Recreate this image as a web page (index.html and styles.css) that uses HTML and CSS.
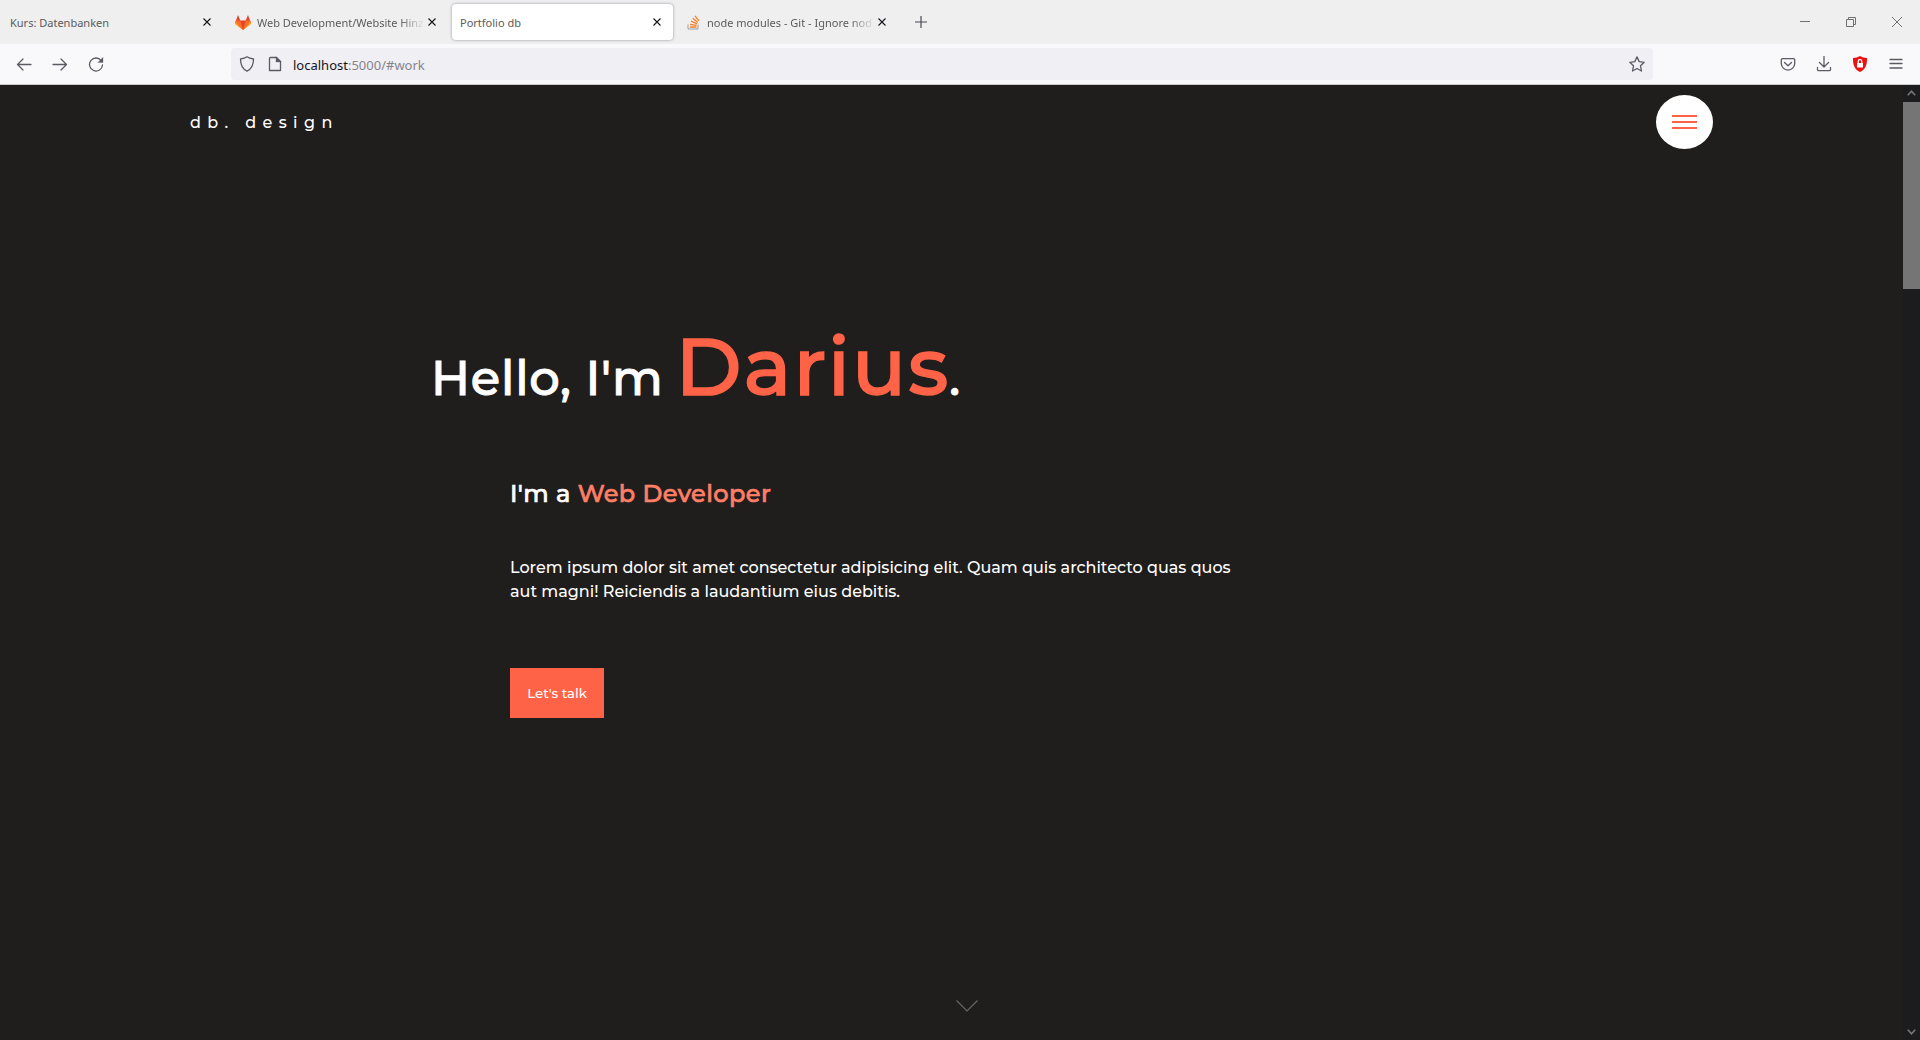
FILE: index.html
```html
<!DOCTYPE html>
<html lang="en">
<head>
<meta charset="utf-8">
<title>Portfolio db</title>
<link rel="stylesheet" href="styles.css">
</head>
<body>
<div class="browser">
  <div class="tabs">
    <div class="tab"><span class="tab-title">Kurs: Datenbanken</span><svg class="close" viewBox="0 0 8 8"><path d="M.5.5l7 7M7.5.5l-7 7"/></svg></div>
    <div class="tab tab-git">
      <svg class="fav" viewBox="0 0 16 15"><path fill="#e24329" d="M3 0l2.300 5.500h5.400L13 0l3 8-8 7L0 8z"/><path fill="#fc6d26" d="M0 8l1-2.500h4.300L8 15zM16 8l-1-2.500h-4.300L8 15z"/><path fill="#fca326" d="M.7 6.500L0 9l8 6-4-4zM15.300 6.500L16 9l-8 6 4-4z"/></svg>
      <span class="tab-title fade">Web Development/Website Hinz</span><svg class="close" viewBox="0 0 8 8"><path d="M.5.5l7 7M7.5.5l-7 7"/></svg></div>
    <div class="tab active"><span class="tab-title">Portfolio db</span><svg class="close" viewBox="0 0 8 8"><path d="M.5.5l7 7M7.5.5l-7 7"/></svg></div>
    <div class="tab tab-so">
      <svg class="fav so" viewBox="0 0 14 15"><path fill="none" stroke="#9c9fa6" d="M1 9.500v4.500h10V9.500"/><path fill="none" stroke="#f48024" stroke-width="1.300" d="M3 12h6.500M3 9.300l6.500 1M4 6.200l6 2.600M5.800 3.300l5 4.200M8 .8l4 5"/></svg>
      <span class="tab-title fade">node modules - Git - Ignore nod</span><svg class="close" viewBox="0 0 8 8"><path d="M.5.5l7 7M7.5.5l-7 7"/></svg></div>
    <svg class="plus" viewBox="0 0 12 12"><path d="M6 0v12M0 6h12"/></svg>
    <div class="window-buttons">
      <svg viewBox="0 0 10 10"><path d="M0 4.500h10"/></svg>
      <svg viewBox="0 0 10 10"><path d="M.5 2.500h7v7h-7zM2.500 2.500v-2h7v7h-2"/></svg>
      <svg viewBox="0 0 10 10"><path d="M0 0l10 10M10 0L0 10"/></svg>
    </div>
  </div>
  <div class="toolbar">
    <div class="nav-buttons">
      <svg viewBox="0 0 16 16"><path d="M15 8.500H1.500M7 3L1.500 8.500 7 14"/></svg>
      <svg viewBox="0 0 16 16"><path d="M1 8.500h13.500M9 3l5.500 5.500L9 14"/></svg>
      <svg viewBox="0 0 16 16"><path d="M13.500 5A6.500 6.500 0 1 0 14.500 9"/><path class="solid" d="M15 1.500V6.500H10z"/></svg>
    </div>
    <div class="urlbar">
      <svg viewBox="0 0 16 16"><path d="M8 .8c2 1.600 4.500 2 6.500 2.200 0 6-2 10-6.500 12.200C3.500 13 1.500 9 1.500 3 3.500 2.800 6 2.400 8 .8z"/></svg>
      <svg viewBox="0 0 16 16"><path d="M3.500 1.500h6l4 4v9h-11v-12a1 1 0 0 1 1-1z"/><path class="solid" d="M9 1v5h5z"/></svg>
      <span class="url">localhost<span class="path">:5000/#work</span></span>
      <svg class="star" viewBox="0 0 16 16"><path d="M8 .9l2.200 4.700 5 .7-3.700 3.500 1 5.200L8 12.500 3.500 15l1-5.200L.8 6.300l5-.7z"/></svg>
    </div>
    <div class="tools">
      <svg viewBox="0 0 16 16"><path d="M2.500 2.700h11a1.200 1.200 0 0 1 1.200 1.200v3.500a6.700 6.700 0 0 1-13.400 0V3.900a1.200 1.200 0 0 1 1.200-1.200zM4.500 6.500L8 9.700l3.500-3.200"/></svg>
      <svg viewBox="0 0 16 16"><path d="M8 0v10.500M3.500 6.500L8 11l4.500-4.500M1.500 11.500v2a1.200 1.200 0 0 0 1.200 1.200h10.600a1.200 1.200 0 0 0 1.200-1.200v-2"/></svg>
      <svg viewBox="0 0 16 16"><path fill="#e11" stroke="none" d="M8 0c2 1.300 4.500 1.800 7 2 .3 6.500-1.500 11.500-7 14C2.500 13.500.7 8.500 1 2 3.500 1.800 6 1.300 8 0z"/><path fill="#fff" stroke="none" d="M5 7h6v4.500H5z"/><path stroke="#fff" d="M6.200 7V5.500a1.800 1.800 0 0 1 3.600 0V7"/></svg>
      <svg viewBox="0 0 16 16"><path d="M2 3.500h12M2 7.500h12M2 12h12"/></svg>
    </div>
  </div>
  <div class="view">
    <div class="page">
      <header class="site-header">
        <span class="logo">db. design</span>
        <button class="menu"><i></i><i></i><i></i></button>
      </header>
      <main class="hero">
        <h1><span class="hello">Hello, I'm</span><span class="name">Darius</span><span class="dot">.</span></h1>
        <div class="intro">
          <h2>I'm a <span class="role">Web Developer</span></h2>
          <p>Lorem ipsum dolor sit amet consectetur adipisicing elit. Quam quis architecto quas quos<br>aut magni! Reiciendis a laudantium eius debitis.</p>
          <button class="talk">Let's talk</button>
        </div>
      </main>
      <svg class="down" viewBox="0 0 22 12"><path d="M.5.500L11 11 21.500.500"/></svg>
    </div>
    <div class="scrollbar">
      <svg viewBox="0 0 9 6"><path d="M.8 5.200l3.700-4 3.700 4"/></svg>
      <div class="thumb"></div>
      <svg class="end" viewBox="0 0 9 6"><path d="M.8.800l3.700 4 3.700-4"/></svg>
    </div>
  </div>
</div>
</body>
</html>
```
FILE: styles.css
```css
* { box-sizing: border-box; }
body { margin: 0; background: #201e1d; }
svg { display: block; fill: none; flex: none; }
.browser { width: 1920px; height: 1040px; display: flex; flex-direction: column; overflow: hidden; }

/* Tab strip */
.tabs { height: 44px; background: #efefef; display: flex; align-items: center; font: 11px "Noto Sans", sans-serif; color: #5b5b5b; }
.tab { flex: none; width: 223px; height: 36px; padding: 0 12px 0 10px; display: flex; align-items: center; border-radius: 4px; }
.tab-title { flex: 1; min-width: 0; white-space: nowrap; overflow: hidden; }
.tab-git { padding: 0 16px 0 12px; width: 229px; }
.tab.active { background: #fff; box-shadow: 0 0 3px #8f8f9d; padding: 0 12px 0 8px; width: 221px; }
.tab-so { padding: 0 11px 0 14px; width: 224px; }
.fade { margin-right: 3px; -webkit-mask-image: linear-gradient(90deg, #000 85%, transparent); mask-image: linear-gradient(90deg, #000 85%, transparent); }
.fav { width: 16px; height: 15px; margin-right: 6px; }
.fav.so { width: 14px; margin-right: 6px; }
.close { width: 8px; height: 8px; stroke: #15141a; stroke-width: 1.1; }
.plus { width: 12px; height: 12px; stroke: #4a4955; stroke-width: 1.2; margin-left: 18px; }
.window-buttons { margin-left: auto; padding-right: 18px; display: flex; gap: 36px; }
.window-buttons svg { width: 10px; height: 10px; stroke: #707070; }

/* Navigation toolbar */
.toolbar { height: 41px; background: #f9f9fb; border-bottom: 1px solid #cccccf; display: flex; align-items: center; }
.toolbar svg { width: 16px; height: 16px; stroke: #5b5b66; stroke-width: 1.3; stroke-linecap: round; stroke-linejoin: round; }
.toolbar .solid { fill: #5b5b66; stroke-width: .3; }
.nav-buttons { width: 231px; padding-left: 16px; display: flex; gap: 20px; }
.urlbar { width: 1422px; height: 32px; padding: 0 8px; border-radius: 4px; background: #f0eff4; display: flex; align-items: center; gap: 12px; }
.url { font: 13px "Noto Sans", sans-serif; color: #15141a; margin: 1px 0 0 -2px; white-space: nowrap; }
.path { color: #85848c; }
.urlbar .star { margin-left: auto; }
.tools { margin-left: auto; padding-right: 16px; display: flex; gap: 20px; }

/* Page */
.view { flex: 1; display: flex; min-height: 0; }
.page { flex: 1; background: #201e1d; color: #fff; font-family: Montserrat, Inter, sans-serif; font-weight: 500; display: flex; flex-direction: column; }
.site-header { height: 74px; padding: 0 190px; display: flex; align-items: center; justify-content: space-between; }
.logo { font-size: 16px; letter-spacing: 6.4px; }
.menu { width: 57px; height: 54px; border: 0; border-radius: 50%; background: #fff; padding: 0; display: flex; flex-direction: column; align-items: center; justify-content: center; gap: 4px; }
.menu i { width: 25px; height: 2px; background: tomato; }
.hero { padding: 158px 0 0 431px; }
h1, h2, p { margin: 0; }
h1 { height: 100px; display: flex; align-items: baseline; font-size: 48px; font-weight: 500; line-height: 100px; letter-spacing: .8px; white-space: pre; -webkit-text-stroke: 1px; }
.name { color: tomato; font-size: 80px; letter-spacing: 2px; margin-left: 12px; -webkit-text-stroke: 1.6px; }
.dot { margin-left: -1px; }
.intro { padding-left: 79px; }
h2 { height: 36px; margin-top: 59px; font-size: 24px; line-height: 36px; font-weight: 500; letter-spacing: .42px; -webkit-text-stroke: .7px; }
.role { color: #ff7e66; }
p { margin-top: 44px; font-size: 16px; line-height: 24px; white-space: nowrap; }
.talk { width: 94px; height: 50px; margin-top: 64px; border: 0; padding: 0; background: tomato; color: #fff; font: 500 13.333px Montserrat, Inter, sans-serif; display: block; }
.down { width: 22px; height: 12px; margin: auto auto 28px 956px; stroke: #666; stroke-width: 1.2; }

/* Scrollbar */
.scrollbar { width: 17px; background: #1c1c1e; display: flex; flex-direction: column; align-items: center; padding: 5px 0; }
.scrollbar svg { width: 9px; height: 6px; stroke: #777; stroke-width: 1.6; }
.thumb { width: 17px; height: 187px; margin-top: 6px; background: #757575; }
.scrollbar .end { margin-top: auto; }
```
